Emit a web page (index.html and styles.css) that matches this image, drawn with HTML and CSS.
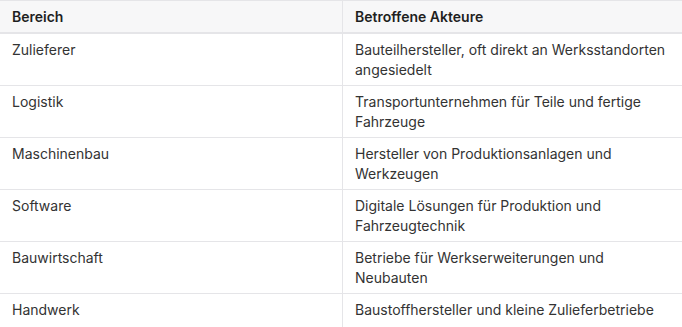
FILE: index.html
```html
<!DOCTYPE html>
<html lang="de">
<head>
<meta charset="utf-8">
<title>Bereiche</title>
<link rel="stylesheet" href="styles.css">
</head>
<body>
<table class="tbl">
  <thead>
    <tr>
      <th class="c1">Bereich</th>
      <th class="c2">Betroffene Akteure</th>
    </tr>
  </thead>
  <tbody>
    <tr><td class="c1">Zulieferer</td><td class="c2">Bauteilhersteller, oft direkt an Werksstandorten angesiedelt</td></tr>
    <tr><td class="c1">Logistik</td><td class="c2">Transportunternehmen für Teile und fertige Fahrzeuge</td></tr>
    <tr><td class="c1">Maschinenbau</td><td class="c2">Hersteller von Produktionsanlagen und Werkzeugen</td></tr>
    <tr><td class="c1">Software</td><td class="c2">Digitale Lösungen für Produktion und Fahrzeugtechnik</td></tr>
    <tr><td class="c1">Bauwirtschaft</td><td class="c2">Betriebe für Werkserweiterungen und Neubauten</td></tr>
    <tr class="last"><td class="c1">Handwerk</td><td class="c2">Baustoffhersteller und kleine Zulieferbetriebe</td></tr>
  </tbody>
</table>
</body>
</html>
```

FILE: styles.css
```css
html, body {
  margin: 0;
  padding: 0;
  background: #ffffff;
}
body {
  font-family: Inter, "Liberation Sans", sans-serif;
  font-size: 14px;
  line-height: 20px;
  color: #333333;
}
.tbl {
  width: 682px;
  table-layout: fixed;
  border-collapse: separate;
  border-spacing: 0;
  border-top: 1px solid #e5e5e8;
}
.tbl th,
.tbl td {
  box-sizing: border-box;
  text-align: left;
  vertical-align: top;
  padding: 6px 12px 5px 12px;
  border-bottom: 1px solid #e5e5e8;
}
.tbl th {
  background: #f7f7f8;
  font-weight: 600;
  color: #1f1f1f;
  padding: 6px 12px 5px 12px;
  border-bottom: 2px solid #e5e5e8;
}
.tbl .last td {
  border-bottom: none;
  padding-bottom: 12px;
}
.tbl .c1 {
  width: 343px;
  border-right: 1px solid #e5e5e8;
}
.tbl .c2 {
  width: 339px;
}
```
